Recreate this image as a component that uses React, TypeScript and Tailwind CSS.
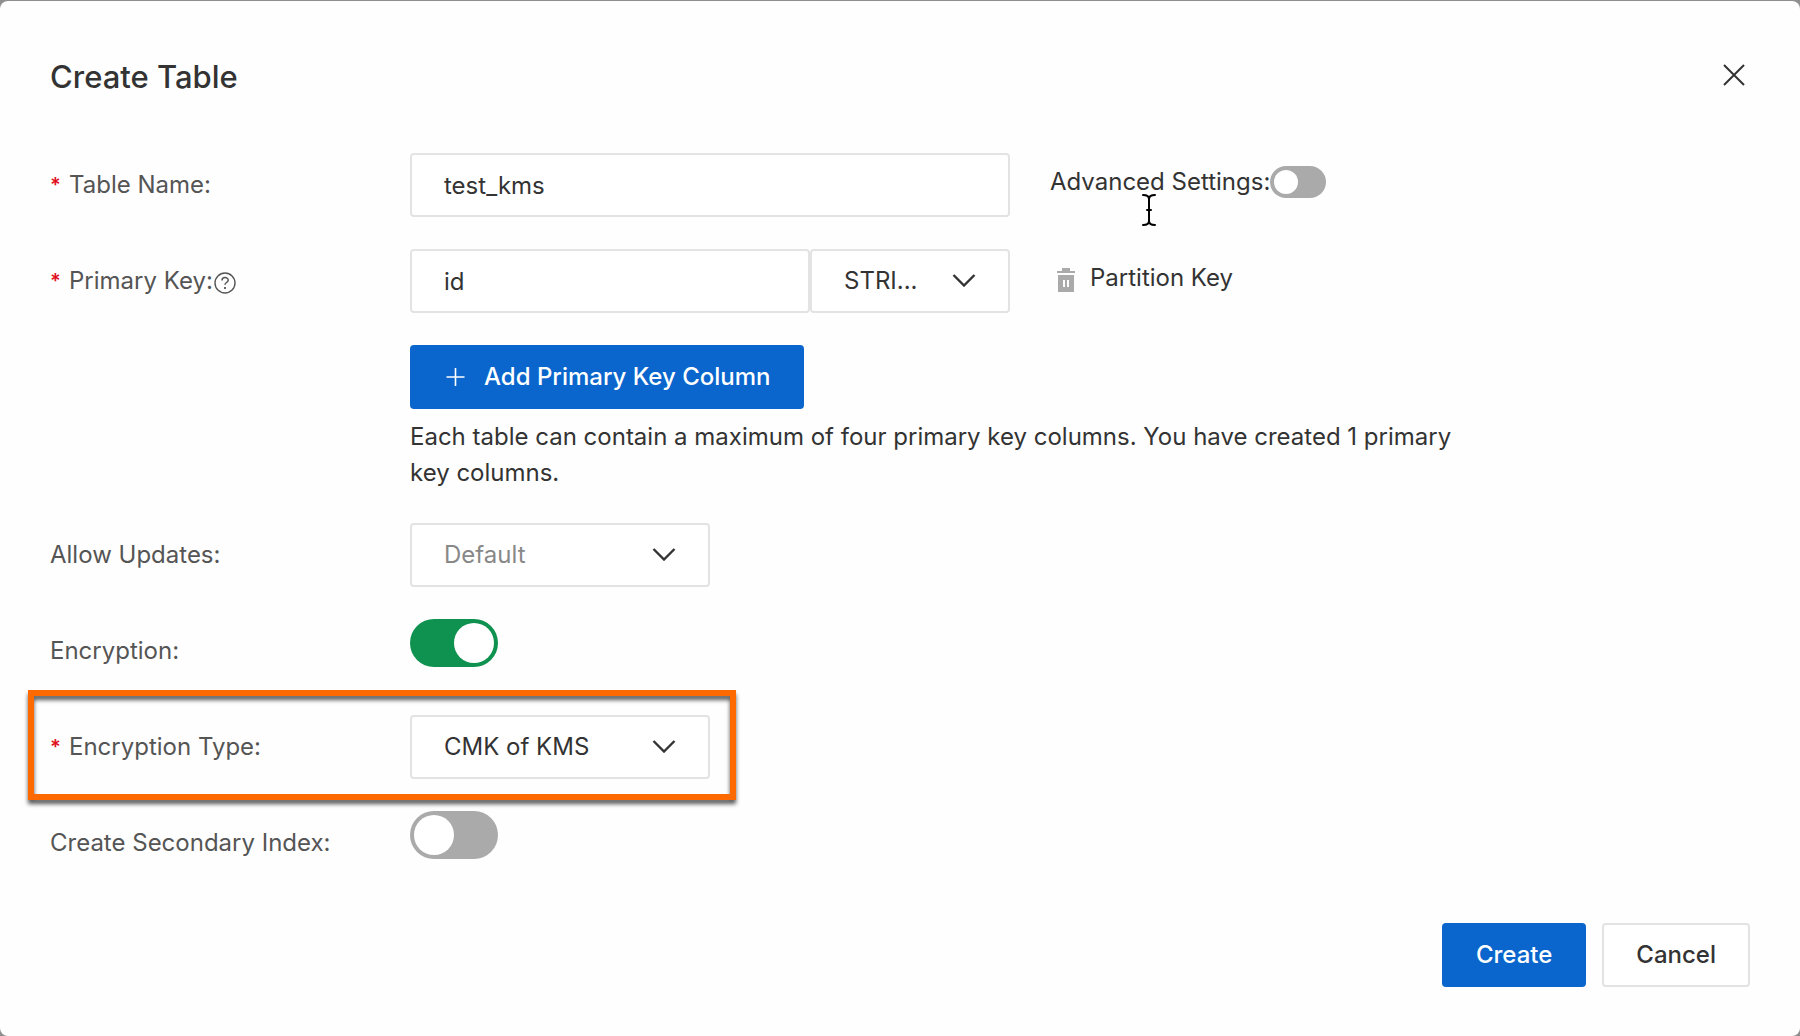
import React from "react";

type SwitchProps = {
  id: string;
  checked?: boolean;
  small?: boolean;
};

function Switch({ id, checked, small }: SwitchProps) {
  const size = small
    ? "h-8 w-14 before:size-6 checked:before:translate-x-6"
    : "h-12 w-22 before:size-10 checked:before:translate-x-10";
  return (
    <input
      id={id}
      type="checkbox"
      role="switch"
      defaultChecked={checked}
      className={`block shrink-0 appearance-none rounded-full bg-[#aaaaaa] p-1 before:block before:rounded-full before:bg-white checked:bg-[#0f9150] ${size}`}
    />
  );
}

type SelectProps = {
  id: string;
  label?: string;
  value: string;
  className: string;
};

function Select({ id, label, value, className }: SelectProps) {
  return (
    <div className={`relative ${className}`}>
      <select
        id={id}
        aria-label={label}
        className="block h-16 w-full appearance-none rounded-sm border-2 border-[#e3e3e3] bg-white pl-8 pr-20"
      >
        <option>{value}</option>
      </select>
      <svg
        viewBox="0 0 24 14"
        className="pointer-events-none absolute right-[34px] top-6 h-[14px] w-6"
        fill="none"
        stroke="#333"
        strokeWidth="2.4"
      >
        <path d="M1.500 2 12 12.500 22.500 2" />
      </svg>
    </div>
  );
}

type LabelProps = {
  htmlFor: string;
  required?: boolean;
  children: React.ReactNode;
};

function Label({ htmlFor, required, children }: LabelProps) {
  return (
    <div className="flex h-16 w-90 shrink-0 items-center text-[#555]">
      {required && (
        <span className="mr-2 w-[11px] text-xl leading-9 font-semibold text-[#e0101c]">*</span>
      )}
      <label htmlFor={htmlFor}>{children}</label>
    </div>
  );
}

const inputClass =
  "block h-16 min-w-0 rounded-sm border-2 border-[#e3e3e3] bg-white px-8 focus:outline-none";

export default function App() {
  return (
    <div className="flex min-h-screen flex-col bg-[#8f8f8f] pt-px font-['Inter','Liberation_Sans',sans-serif] text-[24px] leading-9 text-[#333]">
      <div
        role="dialog"
        aria-labelledby="title"
        className="flex grow flex-col rounded-lg bg-[#fefefe] px-[50px] pb-12"
      >
        <div className="flex items-center justify-between pt-[54px]">
          <h1 id="title" className="text-[31px] leading-11 font-medium">
            Create Table
          </h1>
          <button aria-label="Close" className="flex h-11 w-8 justify-center pt-[9px]">
            <svg viewBox="0 0 22 22" className="size-[22px]" stroke="#333" strokeWidth="2">
              <path d="M1 1 21 21M21 1 1 21" />
            </svg>
          </button>
        </div>

        <form className="flex flex-col gap-8 pt-[54px]">
          <div className="flex">
            <Label htmlFor="name" required>
              Table Name:
            </Label>
            <input id="name" type="text" defaultValue="test_kms" className={`${inputClass} w-150`} />
            <div className="relative ml-10 flex h-[58px] items-center">
              <label htmlFor="advanced">Advanced Settings:</label>
              <Switch id="advanced" small />
              {/* text cursor */}
              <svg
                viewBox="0 0 16 34"
                className="pointer-events-none absolute left-[91px] top-10 h-[34px] w-4"
                fill="none"
                stroke="#000"
                strokeWidth="2"
                strokeLinecap="round"
              >
                <path d="M2 2c3.500 0 6 1.500 6 4v22c0 2.500-2.500 4-6 4M14 2c-3.500 0-6 1.500-6 4v22c0 2.500 2.500 4 6 4M6 17h4" />
              </svg>
            </div>
          </div>

          <div className="flex">
            <Label htmlFor="key" required>
              <span className="flex items-center">
                Primary Key:
                <svg
                  viewBox="0 0 22 22"
                  className="mt-1 ml-px size-[22px]"
                  fill="none"
                  stroke="#555"
                  strokeWidth="1.4"
                >
                  <circle cx="11" cy="11" r="10" />
                  <path d="M8 8.500c0-3.800 6.200-3.800 6.200-.3 0 2.300-3.200 2.300-3.200 4.500" strokeWidth="1.500" />
                  <path d="M11 15v2" strokeWidth="1.800" />
                </svg>
              </span>
            </Label>
            <input id="key" type="text" defaultValue="id" className={`${inputClass} w-100`} />
            <Select id="keyType" label="Key type" value="STRI..." className="w-50" />
            <div className="ml-10 flex h-[58px] items-center">
              <button type="button" aria-label="Delete" className="mt-1 mr-[14px] ml-[6px]">
                <svg viewBox="0 0 20 24" className="h-6 w-5" fill="#aaa">
                  <path d="M6 0h8v3h5v2H1V3h5z" />
                  <path d="M2 7h16v17H2zM7 12v7h2v-7zM11 12v7h2v-7z" fillRule="evenodd" />
                </svg>
              </button>
              <span>Partition Key</span>
            </div>
          </div>

          <div className="pl-90">
            <button
              type="button"
              className="flex h-16 items-center rounded-sm bg-[#0a66cc] px-[34px] font-medium text-white"
            >
              <svg viewBox="0 0 24 24" className="mr-4 size-6" stroke="#fff" strokeWidth="1.6">
                <path d="M2.500 12h18M11.500 3v18" />
              </svg>
              Add Primary Key Column
            </button>
            <p className="mt-[10px] max-w-[1060px]">
              Each table can contain a maximum of four primary key columns. You have created 1 primary
              key columns.
            </p>
          </div>

          <div className="flex">
            <Label htmlFor="updates">Allow Updates:</Label>
            <Select id="updates" value="Default" className="w-75 text-[#888]" />
          </div>

          <div className="flex">
            <Label htmlFor="encryption">Encryption:</Label>
            <Switch id="encryption" checked />
          </div>

          <div className="relative flex w-fit">
            <Label htmlFor="encryptionType" required>
              Encryption Type:
            </Label>
            <Select id="encryptionType" value="CMK of KMS" className="w-75" />
            <div className="pointer-events-none absolute -top-[25px] -right-[26px] -bottom-[21px] -left-[22px] border-6 border-[#ff6a00] drop-shadow-[0_4px_2px_rgba(0,0,0,0.65)]" />
          </div>

          <div className="flex">
            <Label htmlFor="index">Create Secondary Index:</Label>
            <Switch id="index" />
          </div>
        </form>

        <div className="mt-12 flex justify-end gap-4 font-medium">
          <button type="submit" className="h-16 rounded-sm bg-[#0a66cc] px-[34px] text-white">
            Create
          </button>
          <button type="button" className="h-16 rounded-sm border-2 border-[#e3e3e3] bg-white px-8">
            Cancel
          </button>
        </div>
      </div>
    </div>
  );
}
